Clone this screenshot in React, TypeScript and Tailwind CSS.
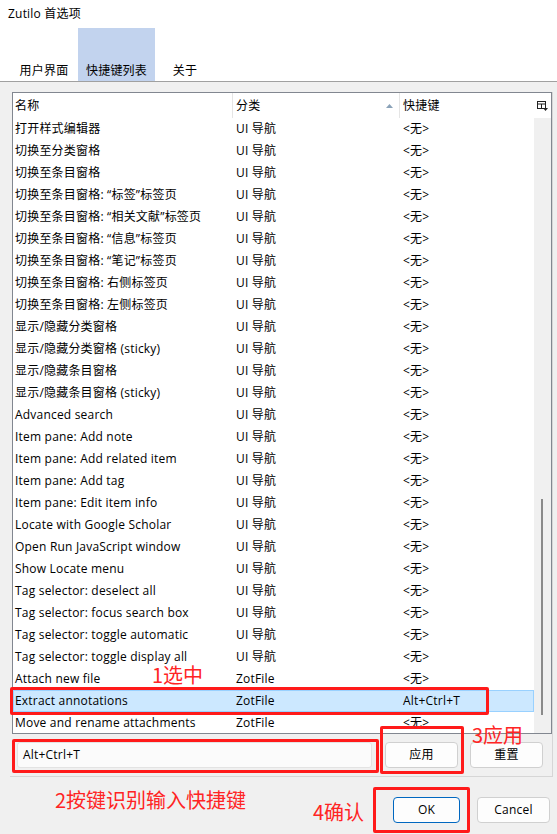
import React from "react";

const rows: [string, string, string][] = [
  ["打开样式编辑器", "UI 导航", "<无>"],
  ["切换至分类窗格", "UI 导航", "<无>"],
  ["切换至条目窗格", "UI 导航", "<无>"],
  ["切换至条目窗格: “标签”标签页", "UI 导航", "<无>"],
  ["切换至条目窗格: “相关文献”标签页", "UI 导航", "<无>"],
  ["切换至条目窗格: “信息”标签页", "UI 导航", "<无>"],
  ["切换至条目窗格: “笔记”标签页", "UI 导航", "<无>"],
  ["切换至条目窗格: 右侧标签页", "UI 导航", "<无>"],
  ["切换至条目窗格: 左侧标签页", "UI 导航", "<无>"],
  ["显示/隐藏分类窗格", "UI 导航", "<无>"],
  ["显示/隐藏分类窗格 (sticky)", "UI 导航", "<无>"],
  ["显示/隐藏条目窗格", "UI 导航", "<无>"],
  ["显示/隐藏条目窗格 (sticky)", "UI 导航", "<无>"],
  ["Advanced search", "UI 导航", "<无>"],
  ["Item pane: Add note", "UI 导航", "<无>"],
  ["Item pane: Add related item", "UI 导航", "<无>"],
  ["Item pane: Add tag", "UI 导航", "<无>"],
  ["Item pane: Edit item info", "UI 导航", "<无>"],
  ["Locate with Google Scholar", "UI 导航", "<无>"],
  ["Open Run JavaScript window", "UI 导航", "<无>"],
  ["Show Locate menu", "UI 导航", "<无>"],
  ["Tag selector: deselect all", "UI 导航", "<无>"],
  ["Tag selector: focus search box", "UI 导航", "<无>"],
  ["Tag selector: toggle automatic", "UI 导航", "<无>"],
  ["Tag selector: toggle display all", "UI 导航", "<无>"],
  ["Attach new file", "ZotFile", "<无>"],
  ["Extract annotations", "ZotFile", "Alt+Ctrl+T"],
  ["Move and rename attachments", "ZotFile", "<无>"],
];

const SELECTED = 26;

function ColumnPicker() {
  return (
    <svg width="11" height="10" viewBox="0 0 11 10" fill="none">
      <rect x="0.5" y="0.5" width="8" height="7" stroke="#222" />
      <line x1="0" y1="3" x2="9" y2="3" stroke="#222" />
      <line x1="4.5" y1="3" x2="4.5" y2="8" stroke="#222" />
      <path d="M6 7h5l-2.5 3z" fill="#222" />
    </svg>
  );
}

export default function App() {
  return (
    <div
      className="relative w-[557px] h-[834px] overflow-hidden bg-[#f0f0f0] text-[12px] text-black tracking-[0.2px]"
      style={{ fontFamily: '"Open Sans", "Noto Sans CJK SC", sans-serif' }}
    >
      {/* title + tabs */}
      <div className="bg-white border-b border-[#a0a0a0] h-[82px] flex flex-col">
        <div className="h-[28px] pl-[8px] flex items-center">Zutilo 首选项</div>
        <div className="flex h-[53px] items-end pl-[10px]">
          <div className="h-[53px] w-[68px] flex items-end justify-center pb-[1px]">用户界面</div>
          <div className="h-[53px] w-[77px] bg-[#c2d3ee] flex items-end justify-center pb-[1px]">快捷键列表</div>
          <div className="h-[53px] w-[60px] flex items-end justify-center pb-[1px]">关于</div>
        </div>
      </div>

      {/* tab panel */}
      <div className="ml-[10px] mt-[10px] w-[543px] border-r border-b border-[#d6d6d6] pb-[4px]">
        {/* tree */}
        <div className="ml-[2px] w-[540px] h-[642px] border border-[#828790] bg-white flex flex-col">
          <div className="flex h-[25px] shrink-0">
            <div className="w-[220px] pl-[2px] flex items-center border-r border-[#e5e5e5]">名称</div>
            <div className="w-[167px] pl-[3px] pr-[6px] flex items-center justify-between border-r border-[#e5e5e5]">
              <span>分类</span>
              <svg width="7" height="4" viewBox="0 0 7 4">
                <path d="M0 4L3.5 0L7 4z" fill="#8aa2b8" />
              </svg>
            </div>
            <div className="w-[134px] pl-[3px] flex items-center">快捷键</div>
            <div className="w-[17px] flex items-center justify-center">
              <ColumnPicker />
            </div>
          </div>
          <div className="flex flex-1 overflow-hidden">
            <div className="w-[521px] flex flex-col">
              {rows.map((r, i) => (
                <div
                  key={i}
                  className={
                    i === SELECTED
                      ? "flex h-[22px] shrink-0 items-center bg-[#cce8ff] border border-[#99d1ff]"
                      : "flex h-[22px] shrink-0 items-center border border-transparent"
                  }
                >
                  <div className="w-[219px] pl-[1px] whitespace-nowrap overflow-hidden">{r[0]}</div>
                  <div className="w-[167px] pl-[3px] whitespace-nowrap">{r[1]}</div>
                  <div className="w-[133px] pl-[3px] whitespace-nowrap">{r[2]}</div>
                </div>
              ))}
            </div>
            <div className="w-[17px] bg-[#f0f0f0] relative">
              <div className="absolute left-[7px] top-[381px] w-[2px] h-[216px] bg-[#8a8a8a]" />
            </div>
          </div>
        </div>

        {/* key input row */}
        <div className="flex items-center h-[34px] mt-[4px]">
          <div className="ml-[7px] w-[355px] h-[26px] bg-[#fbfbfb] border border-[#e3e3e3] rounded-[3px] flex items-center pl-[5px]">
            Alt+Ctrl+T
          </div>
          <button className="ml-[13px] w-[73px] h-[26px] bg-[#fdfdfd] border border-[#d0d0d0] rounded-[4px]">应用</button>
          <button className="ml-[12px] w-[73px] h-[26px] bg-[#fdfdfd] border border-[#d0d0d0] rounded-[4px]">重置</button>
        </div>
      </div>

      {/* dialog buttons */}
      <div className="flex justify-end gap-[17px] pr-[7px] mt-[20px]">
        <button className="w-[67px] h-[26px] bg-[#fdfdfd] border border-[#0067c0] rounded-[4px]">OK</button>
        <button className="w-[73px] h-[26px] bg-[#fdfdfd] border border-[#d0d0d0] rounded-[4px]">Cancel</button>
      </div>

      {/* red annotations */}
      <div
        className="absolute inset-0 pointer-events-none text-[#ff2424] text-[20px] tracking-normal"
        style={{ fontFamily: '"Noto Sans CJK SC", "Liberation Sans", sans-serif' }}
      >
        <div className="absolute left-[10px] top-[687px] w-[479px] h-[28px] border-[3px] border-[#ff1a1a] rounded-[2px]" />
        <div className="absolute left-[152px] top-[665px] leading-none">1选中</div>
        <div className="absolute left-[12px] top-[739px] w-[367px] h-[34px] border-[3px] border-[#ff1a1a] rounded-[2px]" />
        <div className="absolute left-[380px] top-[726px] w-[84px] h-[48px] border-[3px] border-[#ff1a1a] rounded-[2px]" />
        <div className="absolute left-[472px] top-[725px] leading-none">3应用</div>
        <div className="absolute left-[55px] top-[790px] leading-none">2按键识别输入快捷键</div>
        <div className="absolute left-[313px] top-[802px] leading-none">4确认</div>
        <div className="absolute left-[373px] top-[787px] w-[97px] h-[46px] border-[3px] border-[#ff1a1a] rounded-[2px]" />
      </div>
    </div>
  );
}
